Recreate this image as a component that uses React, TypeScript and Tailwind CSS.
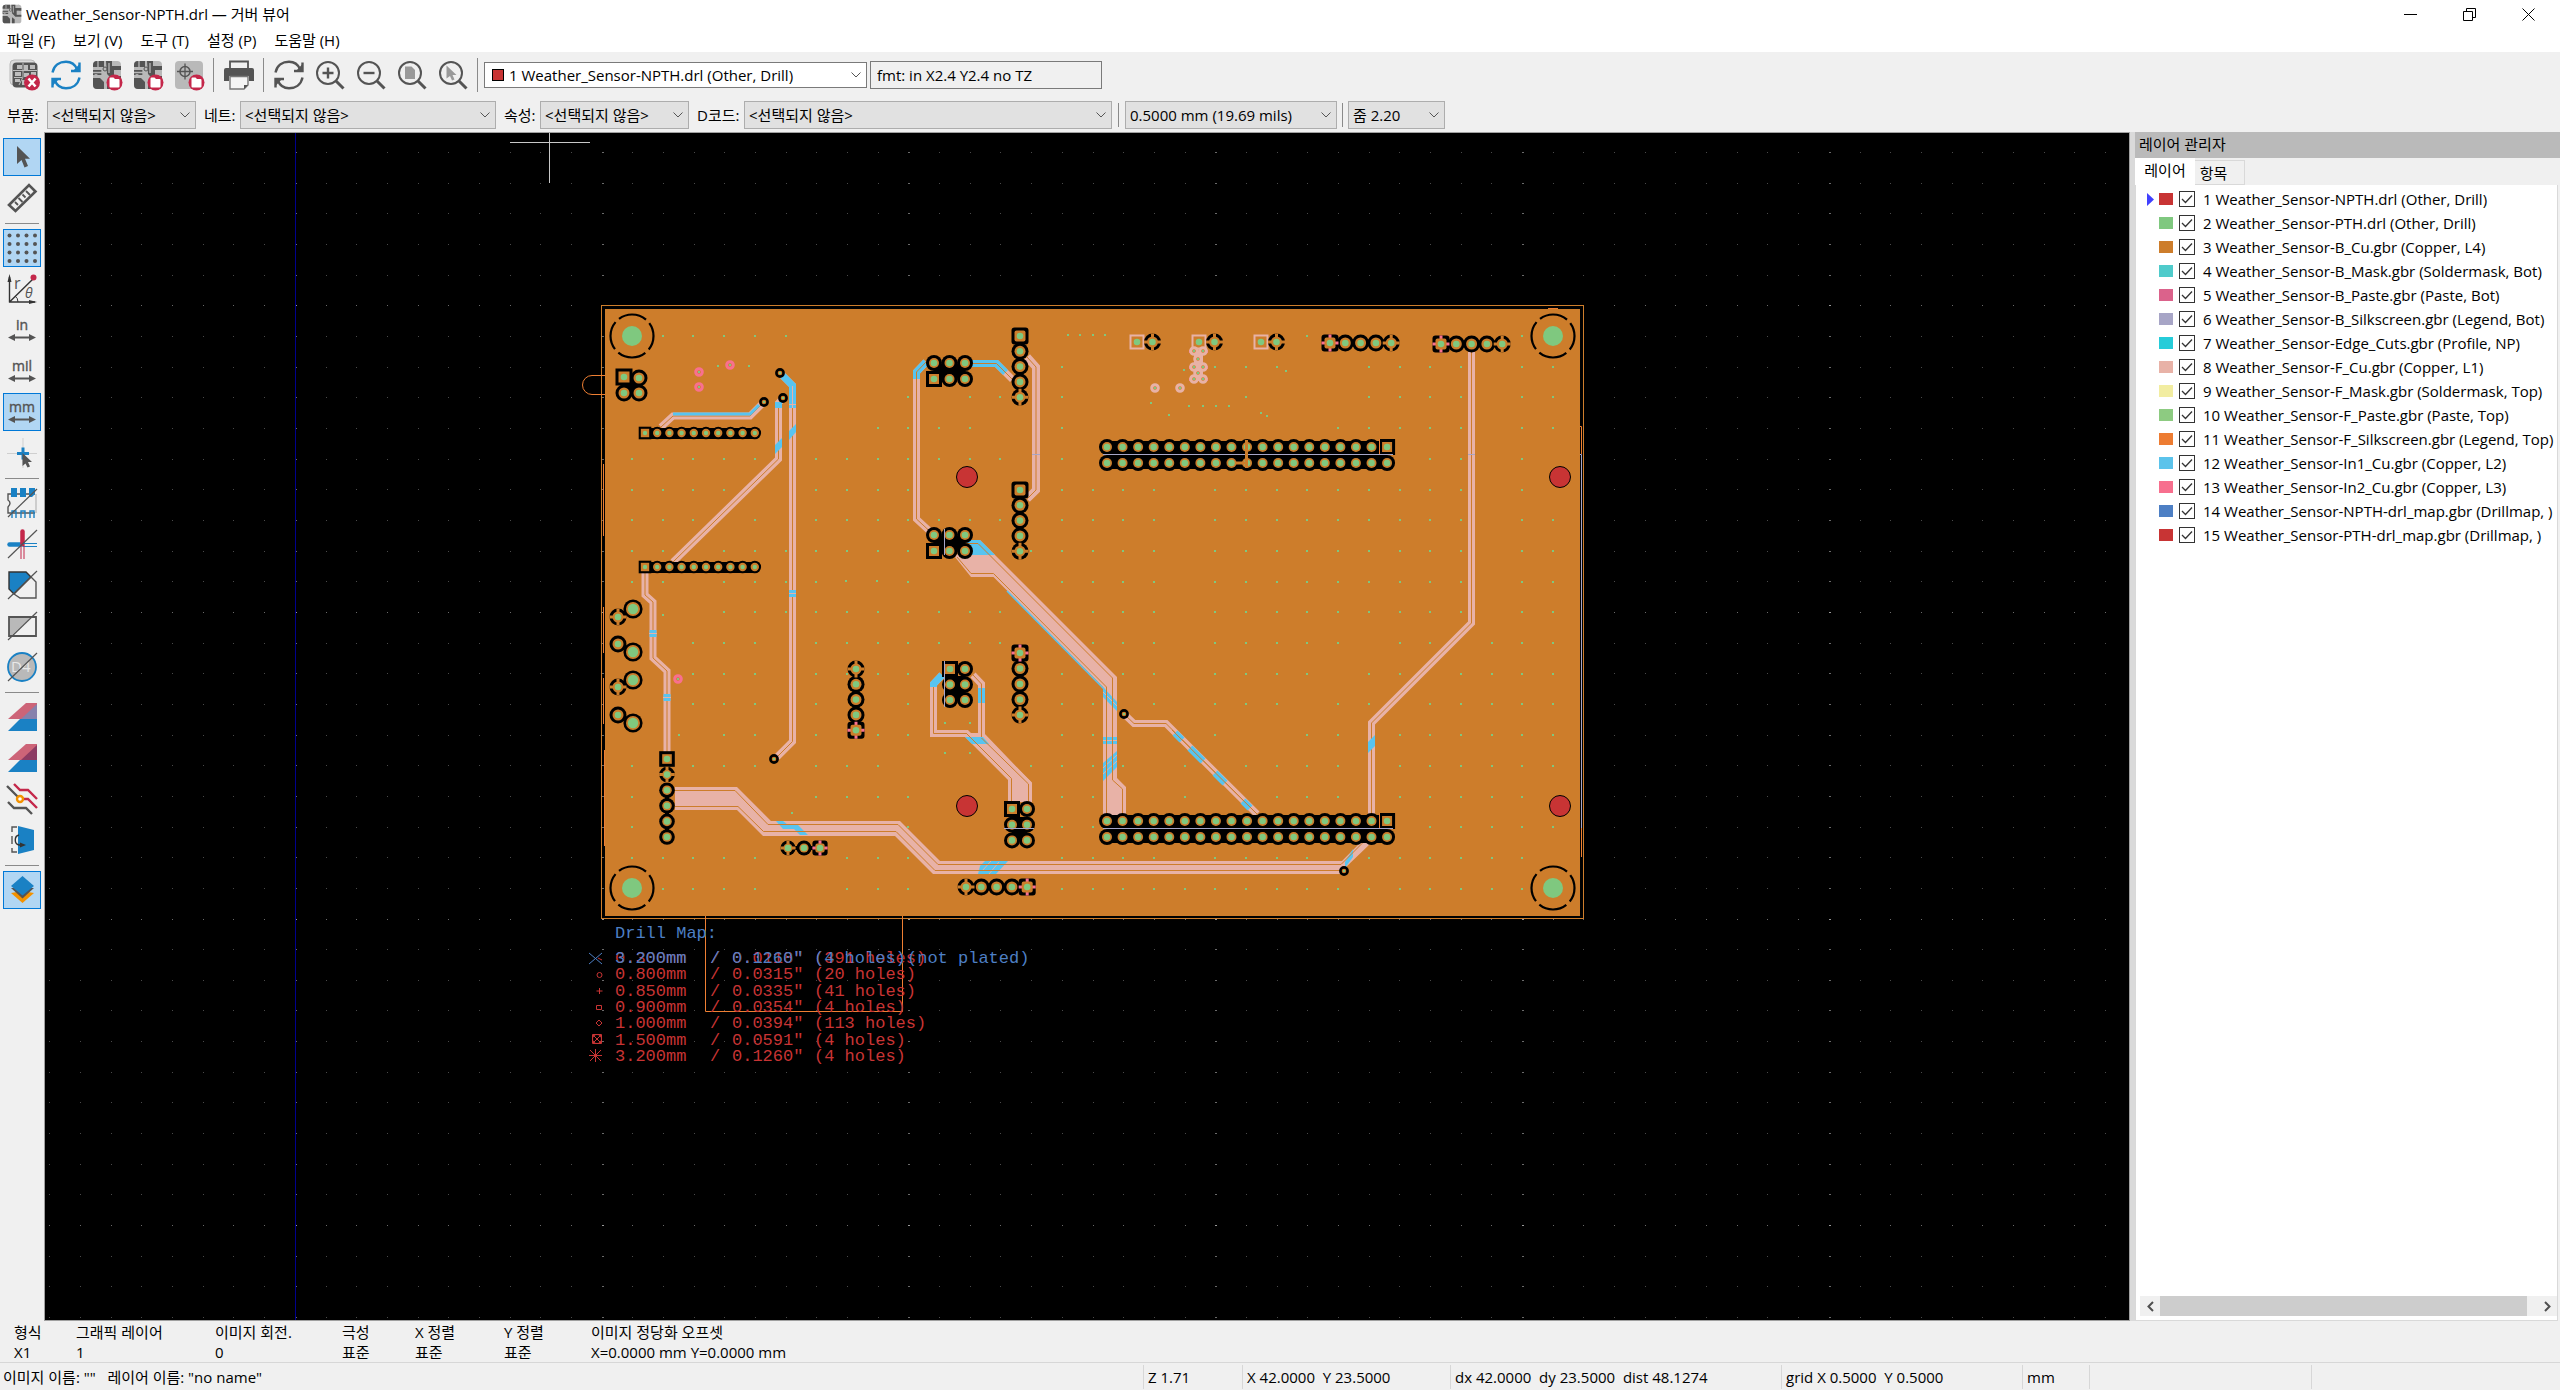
import { useState, ReactNode } from "react";

const COPPER = "#CD7D2B";
const FRONT = "#E8B2A7";
const INNER = "#58C4F0";
const DRILL = "#7FC87F";
const PINK = "#F8708F";
const SILK = "#EE7F33";
const LILAC = "#A6A6C8";
const RED = "#C83434";
const BLUE = "#4D7FC4";

const layers = [
  { name: "Weather_Sensor-NPTH.drl (Other, Drill)", color: "#C83434" },
  { name: "Weather_Sensor-PTH.drl (Other, Drill)", color: "#7FC87F" },
  { name: "Weather_Sensor-B_Cu.gbr (Copper, L4)", color: "#CD7D2B" },
  { name: "Weather_Sensor-B_Mask.gbr (Soldermask, Bot)", color: "#4FCBCB" },
  { name: "Weather_Sensor-B_Paste.gbr (Paste, Bot)", color: "#DB628B" },
  { name: "Weather_Sensor-B_Silkscreen.gbr (Legend, Bot)", color: "#A7A5C6" },
  { name: "Weather_Sensor-Edge_Cuts.gbr (Profile, NP)", color: "#26CCD9" },
  { name: "Weather_Sensor-F_Cu.gbr (Copper, L1)", color: "#E8B2A7" },
  { name: "Weather_Sensor-F_Mask.gbr (Soldermask, Top)", color: "#F2EDA1" },
  { name: "Weather_Sensor-F_Paste.gbr (Paste, Top)", color: "#8DCB81" },
  { name: "Weather_Sensor-F_Silkscreen.gbr (Legend, Top)", color: "#ED7C32" },
  { name: "Weather_Sensor-In1_Cu.gbr (Copper, L2)", color: "#5BC3EB" },
  { name: "Weather_Sensor-In2_Cu.gbr (Copper, L3)", color: "#F76F8E" },
  { name: "Weather_Sensor-NPTH-drl_map.gbr (Drillmap, )", color: "#4D7FC4" },
  { name: "Weather_Sensor-PTH-drl_map.gbr (Drillmap, )", color: "#C83434" },
];

/* ---------- toolbar icons ---------- */

function Icon({ children, size = 30 }: { children: ReactNode; size?: number }) {
  return (
    <svg width={size} height={size} viewBox="0 0 30 30" fill="none" aria-hidden="true" className="block overflow-visible">
      {children}
    </svg>
  );
}

function BoardArt() {
  return (
    <>
      <rect x="1" y="1" width="28" height="28" rx="4" fill="#B9B9B9" />
      <path d="M5 1h7v6H1V5a4 4 0 0 1 4-4zM1 10h9v5H1zM1 18h7l4 4v7H5a4 4 0 0 1-4-4z" fill="#545454" />
      <path d="M14 1h6v5h9v4h-7v6h7v3h-9l-5-5zM15 20l4 3v6h-4z" fill="#545454" />
      <path d="M6 1v6M10 10v5M25 1v5M1 12.500h9M24 10v6M17 3v10" stroke="#B9B9B9" strokeWidth="1.300" />
      <circle cx="13" cy="9" r="2" fill="#B9B9B9" stroke="#545454" />
      <circle cx="4" cy="16" r="2" fill="#B9B9B9" />
    </>
  );
}

function FolderBadge() {
  return (
    <>
      <circle cx="22.500" cy="22.500" r="8" fill="#C4274A" />
      <path d="M17.500 18.500q0-1 1-1h3l1.500 1.500h3.500q1 0 1 1v6.500q0 1-1 1h-8q-1 0-1-1z" fill="#fff" />
    </>
  );
}

function ClearIcon() {
  return (
    <Icon>
      <rect x="0" y="0" width="25" height="25" rx="4" fill="#DCDCDC" stroke="#BBB" />
      <rect x="2.500" y="2.500" width="25" height="25" rx="4" fill="#545454" />
      <path d="M7 5h5v4H7zM14 5h4v6h-4zM20 5h5v4h-5zM5 12h6v4H5zM14 13h5v4h-5zM21 12h5v3h-5zM5 19h5v3H5zM12 20h4v5h-4z" fill="#BDBDBD" />
      <path d="M3 10.500h24M13 3v14l-4 8M4 17.500h8" stroke="#BDBDBD" />
      <circle cx="22" cy="22.500" r="8" fill="#C4274A" />
      <path d="M18.500 18.500l7 8M25.500 18.500l-7 8" stroke="#fff" strokeWidth="2.600" />
    </Icon>
  );
}

function ReloadIcon({ color }: { color: string }) {
  return (
    <Icon>
      <path d="M1.500 12.500C3 5 9 1.800 15 1.800c5 0 9 2.500 11 7.500M28.500 17.500C27 25 21 28.200 15 28.200c-5 0-9-2.500-11-7.500" stroke={color} strokeWidth="2.400" />
      <path d="M28.500 2.500v8.500H20M1.500 27.500V19H10" stroke={color} strokeWidth="2.400" />
      <path d="M28.500 4v7H22zM1.500 26V19H8z" fill={color} />
    </Icon>
  );
}

function OpenBoardIcon() {
  return (
    <Icon>
      <BoardArt />
      <FolderBadge />
    </Icon>
  );
}

function OpenDrillIcon() {
  return (
    <Icon>
      <rect x="1" y="1" width="28" height="28" rx="4" fill="#B9B9B9" />
      <circle cx="11" cy="11.500" r="5" stroke="#545454" strokeWidth="1.500" />
      <path d="M11 3.500v16M3 11.500h16" stroke="#545454" strokeWidth="1.300" />
      <FolderBadge />
    </Icon>
  );
}

function PrinterIcon() {
  return (
    <Icon>
      <path d="M6 8V1.500h18V8" stroke="#545454" strokeWidth="1.800" />
      <path d="M2 8h26q2 0 2 2v11h-5v-5H5v5H0V10q0-2 2-2z" fill="#545454" />
      <path d="M6 16.500h18V25l-4 4H6z" fill="#F5F5F5" stroke="#777" strokeWidth="1.400" />
      <path d="M24 25h-4v4z" fill="#545454" />
    </Icon>
  );
}

function ZoomIcon({ children }: { children: ReactNode }) {
  return (
    <Icon>
      <circle cx="13" cy="13" r="11" stroke="#545454" strokeWidth="2" />
      <path d="M20.500 20.500l8 8" stroke="#545454" strokeWidth="3" />
      {children}
    </Icon>
  );
}

const ARROW_PATH = "M10 4v18l4.500-4 3 7.500 3.500-1.500-3-7.200h5z";

function UnitIcon({ label }: { label: string }) {
  return (
    <Icon>
      <text x="15" y="15" textAnchor="middle" fontSize="14" fill="#545454" stroke="#545454" strokeWidth="0.400" fontFamily="Open Sans, sans-serif">
        {label}
      </text>
      <path d="M4 22.500h22" stroke="#545454" strokeWidth="2" />
      <path d="M1 22.500l7-3.500v7zM29 22.500l-7-3.500v7z" fill="#545454" />
    </Icon>
  );
}

const SLASH = <path d="M1 29L30 1" stroke="#545454" strokeWidth="1.200" />;

/* ---------- small controls ---------- */

function ToolButton({ label, active, children }: { label: string; active?: boolean; children: ReactNode }) {
  return (
    <button
      type="button"
      aria-label={label}
      className={
        "flex size-[38px] shrink-0 items-center justify-center border " +
        (active ? "border-[#0078D7] bg-[#B1D6F3]" : "border-transparent")
      }
    >
      {children}
    </button>
  );
}

function VSep() {
  return <div className="mr-[3px] ml-0.5 h-[34px] w-px shrink-0 bg-[#8A8A8A]" />;
}

function HSep() {
  return (
    <div className="flex h-1.5 w-[38px] items-center px-0.5">
      <div className="h-px w-full bg-[#8A8A8A]" />
    </div>
  );
}

function Chevron() {
  return (
    <svg width="10" height="6" viewBox="0 0 10 6" fill="none" className="pointer-events-none absolute top-1/2 right-1.5 -translate-y-1/2">
      <path d="M0.500 0.500L5 5L9.500 0.500" stroke="#555" />
    </svg>
  );
}

function Combo({ id, label, value, width }: { id: string; label: string; value: string; width: string }) {
  return (
    <div className={"relative h-7 " + width}>
      <select id={id} aria-label={label} className="h-full w-full appearance-none border border-[#ADADAD] bg-[#E1E1E1] pr-5 pl-1">
        <option>{value}</option>
      </select>
      <Chevron />
    </div>
  );
}

/* ---------- board drawing ---------- */

function Dots() {
  const dots: ReactNode[] = [];
  for (let i = 0; i < 68; i++) {
    for (let j = 0; j < 39; j++) {
      const big = (i - 18) % 10 === 0;
      const bigRow = (j - 5) % 10 === 0;
      const x = Math.round(49.400 + i * 30.680);
      const y = Math.round(152 + j * 30.660);
      dots.push(
        <rect key={i + "-" + j} x={x} y={y} width={big ? 2 : 1} height="1" fill={big && bigRow ? "#999" : big || bigRow ? "#6a6a6a" : "#4a4a4a"} />
      );
    }
  }
  return <g>{dots}</g>;
}

// stitching vias, one list of columns for each row
const viaRows = [
  [1, 2, 3, 4, 5, 22, 29],
  [14, 19, 20, 21, 24, 25, 26, 27, 29, 30],
  [9, 11, 12, 14, 20, 24, 25, 26, 27, 29, 30],
  [8, 9, 10, 11, 14, 23, 24, 25, 26, 27, 29, 30],
  [0, 1, 2, 3, 4, 6, 7, 8, 9, 10, 11, 12, 14, 26, 27, 29],
  [0, 1, 2, 3, 6, 7, 8, 9, 14, 15, 16, 17, 19, 20, 21, 22, 23, 24, 25, 26, 27, 29],
  [0, 1, 2, 4, 6, 7, 8, 9, 10, 11, 12, 14, 15, 16, 17, 19, 20, 21, 22, 23, 24, 25, 26, 27, 29, 30],
  [0, 1, 3, 4, 5, 6, 7, 8, 9, 13, 14, 15, 16, 17, 19, 20, 21, 22, 23, 24, 25, 26, 27, 29, 30],
  [0, 1, 3, 4, 5, 6, 9, 14, 15, 16, 17, 19, 20, 21, 22, 23, 24, 25, 26, 27, 29, 30],
  [3, 4, 5, 6, 7, 8, 9, 10, 11, 12, 14, 15, 16, 17, 19, 20, 21, 22, 23, 24, 25, 26, 27, 29, 30],
  [2, 3, 4, 6, 7, 8, 9, 10, 11, 12, 15, 16, 17, 19, 20, 21, 22, 23, 25, 26, 28, 29, 30],
  [2, 3, 4, 6, 7, 8, 9, 14, 15, 16, 17, 19, 20, 21, 22, 24, 25, 27, 28, 29, 30],
  [2, 3, 4, 6, 9, 14, 15, 17, 19, 20, 21, 23, 24, 26, 27, 28, 29, 30],
  [3, 4, 6, 8, 9, 14, 15, 19, 22, 23, 25, 26, 27, 28, 29, 30],
  [0, 2, 3, 4, 6, 7, 8, 13, 14, 15, 16, 18, 20, 21, 22, 23, 25, 26, 27, 28, 29, 30],
  [0, 6, 7, 8, 9, 14, 15, 18, 21, 22, 23, 25, 26, 27, 28, 29],
  [0, 6, 7, 8, 9, 14, 15, 26, 27, 28, 29, 30],
  [0, 1, 2, 3, 4, 7, 8, 9, 14, 15, 16, 17, 19, 20, 21, 22, 24, 25, 26, 27, 28, 29],
  [1, 2, 3, 4, 7, 8, 9, 14, 15, 16, 17, 18, 19, 20, 21, 22, 23, 24, 25, 26, 27, 28, 29],
];

const looseVias = [
  [1068, 335], [1080, 335], [1093, 335], [1105, 335], [718, 366], [749, 366], [1184, 370], [1286, 371],
  [1151, 403], [1189, 406], [1203, 406], [1216, 406], [1229, 406], [1169, 415], [1261, 413], [1267, 416],
  [846, 581], [877, 581], [663, 615], [679, 735], [945, 723], [970, 723], [945, 753], [970, 753], [792, 813],
];

type Kind = "round" | "square" | "box" | "thermal" | "cut" | "pink";
type PadSpec = { x: number; y: number; kind?: Kind; r?: number; hole?: number };

function line(x: number, y: number, dx: number, dy: number, kinds: Kind[], r = 8.500, hole = 3.300): PadSpec[] {
  return kinds.map((kind, i) => ({ x: x + dx * i, y: y + dy * i, kind, r, hole }));
}

const R: Kind = "round";
const nineteen = Array<Kind>(19).fill("round");
const eighteenAndBox: Kind[] = [...Array<Kind>(18).fill("round"), "box"];
const boxAndNine: Kind[] = ["box", ...Array<Kind>(9).fill("round")];

const pads: PadSpec[] = [
  ...line(624, 377, 15, 1, ["box", R]),
  ...line(624, 393, 15, 0, [R, R]),
  ...line(934, 363, 15.500, 0, [R, R, R], 8),
  ...line(934, 379, 15.500, 0, ["box", R, R], 8),
  ...line(934, 535, 15.500, 0, [R, R, R], 8),
  ...line(934, 551, 15.500, 0, ["box", R, R], 8),
  ...line(1020, 336, 0, 15.300, ["square", R, R, R, "thermal"]),
  ...line(1020, 490, 0, 15.300, ["square", R, R, R, "thermal"]),
  ...line(645, 433, 12.200, 0, boxAndNine, 6.300, 2.200),
  ...line(645, 567, 12.200, 0, boxAndNine, 6.300, 2.200),
  ...line(856, 669, 0, 15.300, ["thermal", R, R, R, "cut"]),
  ...line(950, 669, 0, 15.500, ["box", R, R], 8),
  ...line(965, 669, 0, 15.500, [R, R, R], 8),
  ...line(1020, 653, 0, 15.500, ["cut", R, R, R, "thermal"]),
  ...line(667, 759, 0, 15.600, ["box", "thermal", R, R, R, R], 7.800),
  ...line(788, 848, 16, 0, ["thermal", R, "cut"], 7.600),
  ...line(1012, 809, 0, 15.700, ["box", R, R], 8),
  ...line(1027, 809, 0, 15.700, [R, R, R], 8),
  ...line(966, 887, 15.300, 0, ["thermal", R, R, R, "cut"]),
  ...line(1137, 342, 15.500, 0, ["pink", "thermal"]),
  ...line(1199, 342, 15.500, 0, ["pink", "thermal"]),
  ...line(1261, 342, 15.500, 0, ["pink", "thermal"]),
  ...line(1330, 343, 15.300, 0, ["cut", R, R, R, "thermal"]),
  ...line(1441, 344, 15.300, 0, ["cut", R, R, R, "thermal"]),
  ...line(1107, 447, 15.560, 0, eighteenAndBox, 8),
  ...line(1107, 463, 15.560, 0, nineteen, 8),
  ...line(1107, 821, 15.560, 0, eighteenAndBox, 8),
  ...line(1107, 837, 15.560, 0, nineteen, 8),
  { x: 633, y: 609, r: 9.600, hole: 5.200 },
  { x: 633, y: 652, r: 9.600, hole: 5.200 },
  { x: 633, y: 680, r: 9.600, hole: 5.200 },
  { x: 633, y: 723, r: 9.600, hole: 5.200 },
  { x: 618, y: 617, kind: "thermal" },
  { x: 618, y: 644 },
  { x: 618, y: 687, kind: "thermal" },
  { x: 618, y: 715 },
];

// black web between the clearance rings of touching pads
const webs = [
  [624, 378, 15, 15], [934, 364, 31, 14], [934, 536, 31, 14], [945, 676, 20, 24], [1012, 817, 15, 23],
  [1107, 441, 280, 28], [1107, 815, 280, 28], [645, 428, 110, 11], [645, 562, 110, 11],
  [1018, 345, 4, 46], [1018, 499, 4, 45], [854, 676, 4, 48], [1018, 660, 4, 48], [665, 784, 4, 48],
  [972, 885, 48, 4], [1340, 341, 45, 4], [1450, 342, 46, 4], [794, 846, 20, 4],
];

function PadBack({ x, y, kind = "round", r = 8.500 }: PadSpec) {
  if (kind === "box") return <rect x={x - r} y={y - r} width={r * 2} height={r * 2} fill="#000" />;
  if (kind === "square" || kind === "cut") return <rect x={x - r} y={y - r} width={r * 2} height={r * 2} rx="3" fill="#000" />;
  if (kind === "pink") return <rect x={x - r + 1} y={y - r + 1} width={r * 2 - 2} height={r * 2 - 2} fill={FRONT} />;
  return <circle cx={x} cy={y} r={r} fill="#000" />;
}

function PadFront({ x, y, kind = "round", r = 8.500, hole = 3.300 }: PadSpec) {
  const inner = r > 9 ? 7 : r < 7 ? 4.200 : r - 3;
  const boxed = kind === "box" || kind === "pink" || kind === "square" || kind === "cut";
  return (
    <g>
      {kind === "thermal" && <path d={`M${x - r} ${y}h${r * 2}M${x} ${y - r}v${r * 2}`} stroke={COPPER} strokeWidth="3" />}
      {kind === "cut" && <path d={`M${x - r} ${y}h${r * 2}M${x} ${y - r}v${r * 2}`} stroke={PINK} strokeWidth="3" />}
      {boxed ? (
        <rect x={x - inner} y={y - inner} width={inner * 2} height={inner * 2} rx={kind === "square" || kind === "cut" ? 2 : 0} fill={COPPER} />
      ) : (
        <circle cx={x} cy={y} r={inner} fill={COPPER} />
      )}
      <circle cx={x} cy={y} r={hole} fill={DRILL} />
    </g>
  );
}

function Trace({ d, w = 7, color = FRONT }: { d: string; w?: number; color?: string }) {
  return (
    <>
      <path d={d} stroke={color} strokeWidth={w} />
      <path d={d} stroke={COPPER} strokeWidth="1" />
    </>
  );
}

function Traces() {
  return (
    <g fill="none" strokeLinejoin="miter">
      <Trace d="M661 427l12-11h77l13-13" />
      <path d="M673 414h77l9-9" stroke={INNER} strokeWidth="3" />
      <Trace d="M783 398l-4.500 5v56L673 562" />
      <path d="M778.500 402v6" stroke={INNER} strokeWidth="7" />
      <path d="M775 445l7-7v9l-7 7z" fill={INNER} />
      <Trace d="M780 373l12.500 12.500V741.500L777 757" />
      <path d="M783 376l9.500 9.500V408M792.500 590v7" stroke={INNER} strokeWidth="7" />
      <path d="M789 431l7-7v8l-7 8z" fill={INNER} />
      <path d="M792.500 386v22M789 404.500h7M789 593.500h7" stroke={FRONT} />
      <Trace d="M926 362l-9.500 10V519l13 12" />
      <path d="M926 362l-9.500 10v7" stroke={INNER} strokeWidth="7" />
      <path d="M926 362l-9.500 10v7" stroke={COPPER} />
      <Trace d="M972 363.500h24.500l16 16" />
      <path d="M972 363.500h24.500l9 9" stroke={INNER} strokeWidth="7" />
      <path d="M972 363.500h24.500l14 14" stroke={COPPER} />
      <Trace d="M1027 357l9 10V490l-9 9" w={8} />
      <path d="M1032 454.500h8" stroke={LILAC} />

      {/* wide bus down to the lower 2x19 header */}
      <path d="M955 557L971 577h22.500L1103 687v129h23v-29l-9-9V677L993 553l-13-13h-10z" fill={FRONT} />
      <path d="M967 540h13l15 15h-28z" fill={INNER} />
      <path d="M1007 591l97 98" stroke={INNER} strokeWidth="1.500" />
      <path d="M1103 687l14 15v9l-14-14zM1103 737h14v7h-14zM1103 763l14-12v16l-14 14z" fill={INNER} />
      <path d="M1103 740.500h14M1103 768l14-13M1103 774l14-13M1103 692l14 14" stroke={FRONT} />
      <path d="M965 543.500h13L1112.500 678v102l10 9v27M957 557l14 16.500h22.500L1106.500 687v129" stroke={COPPER} />

      <Trace d="M1124 714l10 9.500h32L1257 814" />
      <path d="M1175 733l7 7M1190 748l13 13M1215 773l10 10M1243 801l7 7" stroke={INNER} strokeWidth="7" />
      <path d="M1172 730L1257 814" stroke={COPPER} />
      <Trace d="M1471.500 352V623L1371.500 723v93" />
      <path d="M1368 742l7-7v11l-7 7z" fill={INNER} />
      <path d="M1468 454.500h7" stroke={LILAC} />

      {/* bus along the bottom edge */}
      <path d="M675 787h62l34 34h129l40 40h402l22-22 6 5-25 24v6H933l-38-38H763l-26-26h-62z" fill={FRONT} />
      <path d="M776 821h7l5 4h10l10 10h-8l-6-6h-11zM985 861h23l-12 13h-18l2-8z" fill={INNER} />
      <path d="M1345 862l8-13v8l-8 11z" fill={INNER} />
      <path d="M982 871l9-10M989 874l10-12" stroke={FRONT} />
      <path d="M675 790.500h60l33 34h130l40 40h403l22-22M675 806.500h63l25.500 25H896l39 39h406" stroke={COPPER} />

      <Trace d="M645 573v22l8 7v56l14 13v82" />
      <path d="M653 630v7M667 694v7" stroke={INNER} strokeWidth="7" />
      <path d="M649 633.500h8M663 697.500h8" stroke={FRONT} />

      <path d="M963 733h21l47 49v20h-23v-24z" fill={FRONT} />
      <Trace d="M942 675l-8.500 9v49.500h33l45 45V802" />
      <Trace d="M973 675l8.500 9v54l47 46v18" />
      <path d="M942 675l-8.500 9v3M981.500 688v15" stroke={INNER} strokeWidth="7" />
      <path d="M965 737h18l6 7h-17z" fill={INNER} />
      <path d="M981.500 688v15M966 733l12 12M981.500 738l6 6" stroke={COPPER} />
    </g>
  );
}

const mountHoles = [[632, 336], [632, 888], [1553, 336], [1553, 888]];
const npthHoles = [[967, 477], [1560, 477], [967, 806], [1560, 806]];
const blackVias = [[780, 373], [764, 402], [783, 398], [774, 759], [1124, 714], [1344, 871]];
const pinkVias = [[699, 372], [730, 365], [699, 387], [678, 679]];
const frontVias = [
  [1155, 388], [1180, 388], [1194, 351], [1203, 351], [1198, 359], [1194, 367], [1203, 367], [1198, 373], [1194, 379], [1203, 379],
];

const drillRows = [
  ["0.300mm", "0.0118\"", "(391 holes)"],
  ["0.800mm", "0.0315\"", "(20 holes)"],
  ["0.850mm", "0.0335\"", "(41 holes)"],
  ["0.900mm", "0.0354\"", "(4 holes)"],
  ["1.000mm", "0.0394\"", "(113 holes)"],
  ["1.500mm", "0.0591\"", "(4 holes)"],
  ["3.200mm", "0.1260\"", "(4 holes)"],
];

function DrillMap() {
  return (
    <g fontFamily="Liberation Mono, monospace" fontSize="17">
      <text x="615" y="938" fill={BLUE}>Drill Map:</text>
      {drillRows.map((row, i) => (
        <text key={i} y={963 + Math.round(i * 16.300)} fill={RED}>
          <tspan x="615">{row[0]}</tspan>
          <tspan x="710">/</tspan>
          <tspan x="732">{row[1]}</tspan>
          <tspan x="814">{row[2]}</tspan>
        </text>
      ))}
      <text y="963" fill={BLUE}>
        <tspan x="615">3.200mm</tspan>
        <tspan x="710">/</tspan>
        <tspan x="732">0.1260"</tspan>
        <tspan x="814">(4 holes)</tspan>
        <tspan x="907">(not plated)</tspan>
      </text>
      <g fill="none" stroke={RED}>
        <path d="M598 958l4 2M596.500 991h6M599.500 988v6M596.500 1005.500h5v4h-5zM599 1020l3 3-3 3-3-3z" />
        <circle cx="599.500" cy="975" r="2.500" />
        <circle cx="597" cy="1039" r="4.500" />
        <path d="M592.500 1034.500h9v9h-9zM593 1035l8 8M601 1035l-8 8M589 1055.500h13M595.500 1049v13M590 1050l11 11M601 1050l-11 11" />
      </g>
      <path d="M589 953l13 11M602 953l-13 11" stroke={BLUE} />
    </g>
  );
}

function Board() {
  return (
    <svg className="block h-full w-full bg-black" role="img" aria-label="Weather_Sensor">
      <g transform="translate(-45 -133)">
        <Dots />
        <rect x="295" y="133" width="1" height="2000" fill="#00008C" />
        <path d="M510 142.500h80M549.500 133v50" stroke="#C8C8C8" />

        <rect x="601.500" y="305.500" width="982" height="613" fill="none" stroke={COPPER} />
        <rect x="605" y="309" width="975" height="607" fill={COPPER} />

        <g fill={DRILL}>
          {viaRows.map((cols, j) =>
            cols.map((i) => (
              <rect key={j + "-" + i} x={Math.round(631 + i * 30.700)} y={Math.round(335 + j * 30.700)} width="2" height="2" />
            ))
          )}
          {looseVias.map(([x, y]) => (
            <rect key={x + "-" + y} x={x - 1} y={y - 1} width="2" height="2" />
          ))}
        </g>

        <Traces />

        <g fill="#000">
          {webs.map(([x, y, w, h], i) => (
            <rect key={i} x={x} y={y} width={w} height={h} />
          ))}
        </g>
        {pads.map((p, i) => <PadBack key={i} {...p} />)}
        {pads.map((p, i) => <PadFront key={i} {...p} />)}

        {blackVias.map(([x, y], i) => (
          <g key={i}>
            <circle cx={x} cy={y} r="3.600" fill={COPPER} stroke="#000" strokeWidth="2.600" />
            <rect x={x - 1} y={y - 1} width="2" height="2" fill={DRILL} />
          </g>
        ))}
        {pinkVias.map(([x, y], i) => (
          <g key={i}>
            <circle cx={x} cy={y} r="3.300" fill={COPPER} stroke={PINK} strokeWidth="3" />
            <rect x={x - 1} y={y - 1} width="2" height="2" fill={DRILL} />
          </g>
        ))}
        <path d="M1190 350v3M1207 350v3M1190 366v3M1207 366v3M1190 378v3M1207 378v3" stroke={PINK} strokeWidth="2" />
        <rect x="1194" y="351" width="9" height="30" fill={FRONT} />
        {frontVias.map(([x, y], i) => (
          <circle key={i} cx={x} cy={y} r="3.300" fill={COPPER} stroke={FRONT} strokeWidth="3" />
        ))}
        {frontVias.map(([x, y], i) => (
          <rect key={i} x={x - 1} y={y - 1} width="2" height="2" fill={DRILL} />
        ))}

        {mountHoles.map(([x, y], i) => (
          <g key={i}>
            <circle cx={x} cy={y} r="21.500" fill="none" stroke="#000" strokeWidth="2.200" strokeDasharray="29.070 4.700" strokeDashoffset="14.530" />
            <circle cx={x} cy={y} r="10" fill={DRILL} />
          </g>
        ))}
        {npthHoles.map(([x, y], i) => (
          <circle key={i} cx={x} cy={y} r="10.500" fill={RED} stroke="#000" />
        ))}

        {/* silkscreen outlines */}
        <g fill="none" stroke={SILK}>
          <path d="M605 375.500h-13a9.500 9.500 0 0 0 0 19h13M705.500 916v95.500h197V916" />
          <path d="M603.500 464v72M603.500 607v46M603.500 678v46M604.500 750v96M1580 426.500h1.500V454M1581.500 828v29M1548 308.500h10" />
          <path d="M1379.500 439v15M1379.500 813v15" />
        </g>
        <path d="M1580 454.500h1.500V828M1103 454.500h290M1103 828.500h290M944.500 529v26M944.500 661v46M1004 828.500h30" fill="none" stroke={LILAC} />
        <path d="M1246.500 440v28M1236 463h10" stroke={COPPER} strokeWidth="3" />

        <DrillMap />
      </g>
    </svg>
  );
}

/* ---------- window parts ---------- */

function TitleBar() {
  return (
    <header className="flex h-7 shrink-0 items-center bg-white pr-0.5 pl-0.5">
      <Icon size={20}>
        <BoardArt />
      </Icon>
      <h1 className="ml-1 flex-1">Weather_Sensor-NPTH.drl — 거버 뷰어</h1>
      <button type="button" aria-label="최소화" className="flex h-full w-[59px] items-center justify-center">
        <svg width="13" height="13" stroke="#000"><path d="M0 6.500h13" /></svg>
      </button>
      <button type="button" aria-label="이전 크기로" className="flex h-full w-[59px] items-center justify-center">
        <svg width="13" height="13" fill="none" stroke="#000"><path d="M0.500 3.500h9v9h-9zM3.500 3V0.500h9v9H10" /></svg>
      </button>
      <button type="button" aria-label="닫기" className="flex h-full w-[59px] items-center justify-center">
        <svg width="13" height="13" stroke="#000"><path d="M0.500 0.500l12 12M12.500 0.500l-12 12" /></svg>
      </button>
    </header>
  );
}

function MenuBar() {
  return (
    <nav className="flex h-6 shrink-0 items-center gap-[18px] bg-white px-[7px]">
      {["파일 (F)", "보기 (V)", "도구 (T)", "설정 (P)", "도움말 (H)"].map((item) => (
        <button key={item} type="button">{item}</button>
      ))}
    </nav>
  );
}

function MainToolbar() {
  return (
    <div className="flex h-[46px] shrink-0 items-center gap-[3px] pl-1.5">
      <ToolButton label="모든 레이어 지우기"><ClearIcon /></ToolButton>
      <ToolButton label="레이어 다시 읽기"><ReloadIcon color="#1A81C4" /></ToolButton>
      <ToolButton label="자동 감지 파일 열기"><OpenBoardIcon /></ToolButton>
      <ToolButton label="거버 파일 열기"><OpenBoardIcon /></ToolButton>
      <ToolButton label="드릴 파일 열기"><OpenDrillIcon /></ToolButton>
      <VSep />
      <ToolButton label="인쇄"><PrinterIcon /></ToolButton>
      <VSep />
      <ToolButton label="새로 고침"><ReloadIcon color="#545454" /></ToolButton>
      <ToolButton label="확대">
        <ZoomIcon><path d="M7.500 13h11M13 7.500v11" stroke="#545454" strokeWidth="2.400" /></ZoomIcon>
      </ToolButton>
      <ToolButton label="축소">
        <ZoomIcon><path d="M7.500 13h11" stroke="#545454" strokeWidth="2.400" /></ZoomIcon>
      </ToolButton>
      <ToolButton label="화면에 맞추기">
        <ZoomIcon><path d="M8 6.500h6.500l3.500 3.500v9H8z" fill="#999" /></ZoomIcon>
      </ToolButton>
      <ToolButton label="선택 영역 확대">
        <ZoomIcon><path d="M8.500 5.500v13l3.500-2.500 2 4.500 2.500-1-2-4.500h4z" fill="#999" /></ZoomIcon>
      </ToolButton>
      <VSep />
      <div className="relative h-[26px] w-[383px]">
        <span className="pointer-events-none absolute top-1/2 left-2 size-3 -translate-y-1/2 border border-black bg-[#C83434]" />
        <select aria-label="활성 레이어" className="h-full w-full appearance-none border border-[#7A7A7A] bg-white pl-6">
          <option>1 Weather_Sensor-NPTH.drl (Other, Drill)</option>
        </select>
        <Chevron />
      </div>
      <input
        aria-label="형식"
        readOnly
        value="fmt: in X2.4 Y2.4 no TZ"
        className="h-7 w-[232px] border border-[#7A7A7A] bg-[#F0F0F0] px-1.5"
      />
    </div>
  );
}

function FilterToolbar() {
  return (
    <div className="flex h-[34px] shrink-0 items-center pl-[7px]">
      <label htmlFor="cmp" className="w-10">부품:</label>
      <Combo id="cmp" label="부품" value="<선택되지 않음>" width="w-[149px]" />
      <label htmlFor="net" className="ml-2 w-9">네트:</label>
      <Combo id="net" label="네트" value="<선택되지 않음>" width="w-64" />
      <label htmlFor="attr" className="ml-2 w-9">속성:</label>
      <Combo id="attr" label="속성" value="<선택되지 않음>" width="w-[149px]" />
      <label htmlFor="dcode" className="ml-2 w-[47px]">D코드:</label>
      <Combo id="dcode" label="D코드" value="<선택되지 않음>" width="w-[368px]" />
      <div className="mx-1.5 h-6 w-px bg-[#8A8A8A]" />
      <Combo id="grid" label="격자" value="0.5000 mm (19.69 mils)" width="w-[212px]" />
      <div className="mx-[5px] h-6 w-px bg-[#8A8A8A]" />
      <Combo id="zoom" label="줌" value="줌 2.20" width="w-[97px]" />
    </div>
  );
}

function SideToolbar() {
  return (
    <aside className="flex w-11 shrink-0 flex-col items-center gap-[3px] pt-1.5 pr-px">
      <ToolButton label="선택" active>
        <Icon><path d={ARROW_PATH} fill="#545454" /></Icon>
      </ToolButton>
      <ToolButton label="측정">
        <Icon>
          <path d="M2 22L22 2l6.500 6.500L8.500 28z" stroke="#545454" strokeWidth="2.600" />
          <path d="M8 19l3 3M11.500 15l4 4M15.500 11.500l3 3M19 8l4 4" stroke="#545454" strokeWidth="1.800" />
        </Icon>
      </ToolButton>
      <HSep />
      <ToolButton label="격자 표시" active>
        <Icon>
          {[2.500, 11, 19.500, 28].map((x) =>
            [2.500, 11, 19.500, 28].map((y) => <circle key={x + "," + y} cx={x} cy={y} r="2" fill="#545454" />)
          )}
        </Icon>
      </ToolButton>
      <ToolButton label="극좌표">
        <Icon>
          <path d="M2.500 28.500V3M2 28H28M2.500 28L26 5" stroke="#333" strokeWidth="1.400" />
          <path d="M2.500 0l2 8h-4zM30 28l-8 2v-4z" fill="#333" />
          <path d="M8 22q3 2 3 6" stroke="#333" />
          <circle cx="26.500" cy="3.500" r="3" fill="#C4274A" />
          <text x="7" y="15" fontSize="16" fill="#545454" fontFamily="Open Sans, sans-serif">r</text>
          <text x="18" y="24" fontSize="14" fontStyle="italic" fill="#545454" fontFamily="Open Sans, sans-serif">θ</text>
        </Icon>
      </ToolButton>
      <ToolButton label="인치"><UnitIcon label="in" /></ToolButton>
      <ToolButton label="밀"><UnitIcon label="mil" /></ToolButton>
      <ToolButton label="밀리미터" active><UnitIcon label="mm" /></ToolButton>
      <ToolButton label="전체 십자선">
        <Icon>
          <path d="M0 15.500h30M16 0v30" stroke="#CFCFCF" />
          <path d="M10 15.500h12M16 9.500v12" stroke="#1A81C4" strokeWidth="3" />
          <path d="M15.500 15v13l3-2.500 2 4 2.500-1-2-4.500h4z" fill="#545454" />
        </Icon>
      </ToolButton>
      <HSep />
      <ToolButton label="플래시 항목">
        <Icon>
          <path d="M28 6H1v6q4 3 0 7v6h27" stroke="#545454" strokeWidth="1.400" />
          <path d="M29 6v19" stroke="#AAA" />
          <path d="M4 0h6v9H4zM13 0h6v9h-6zM22 0h6v6l-3 3h-3z" fill="#1A81C4" />
          <path d="M5 30v-7h4v7M14 30v-7h4v7M23 30v-7h4v7" stroke="#1A81C4" strokeWidth="1.400" />
          {SLASH}
        </Icon>
      </ToolButton>
      <ToolButton label="선 항목">
        <Icon>
          <path d="M2.500 15.500H15" stroke="#1A81C4" strokeWidth="4.500" strokeLinecap="round" />
          <path d="M15.500 2.500V15" stroke="#C4274A" strokeWidth="4.500" strokeLinecap="round" />
          <path d="M16 14.500h14M16 17.500h14" stroke="#1A81C4" />
          <path d="M14 16v14M17 16v14" stroke="#C4274A" />
          {SLASH}
        </Icon>
      </ToolButton>
      <ToolButton label="다각형 항목">
        <Icon>
          <path d="M2 2h17l5 5L7 24l-5-5z" fill="#1A81C4" stroke="#333" strokeWidth="1.400" />
          <path d="M24 7l5 5v16H13l-6-4" stroke="#545454" strokeWidth="1.400" />
          {SLASH}
        </Icon>
      </ToolButton>
      <ToolButton label="음각 객체">
        <Icon>
          <path d="M2 6h22L4 25H2z" fill="#B9B9B9" />
          <path d="M2 6h27v19H2z" stroke="#545454" strokeWidth="1.800" />
          {SLASH}
        </Icon>
      </ToolButton>
      <ToolButton label="D코드 표시">
        <Icon>
          <circle cx="15" cy="15" r="14" fill="#B9B9B9" stroke="#1A81C4" strokeWidth="1.800" />
          <text x="4" y="20" fontSize="15" fill="#E8E8E8" fontFamily="Open Sans, sans-serif">D4</text>
          {SLASH}
        </Icon>
      </ToolButton>
      <HSep />
      <ToolButton label="차이 모드">
        <Icon>
          <path d="M1 29L13 17h17v12z" fill="#1A81C4" />
          <path d="M1 17L19 1h11v16z" fill="#CD6478" />
          <path d="M14 17L30 2v15z" fill="#8781AC" />
        </Icon>
      </ToolButton>
      <ToolButton label="XOR 모드">
        <Icon>
          <path d="M1 29L13 17h17v12z" fill="#1A81C4" />
          <path d="M1 17L19 1h11v16z" fill="#CD6478" />
          <path d="M14 17L30 2v15z" fill="#8C3B63" />
        </Icon>
      </ToolButton>
      <ToolButton label="고대비 모드">
        <Icon>
          <path d="M7 0l6 6h8l9 9M13 15h8l9 9" stroke="#C4274A" strokeWidth="2.400" />
          <path d="M0 2l12 12M1 18l6 6h12l6 6" stroke="#545454" strokeWidth="2.400" />
          <circle cx="13" cy="15" r="3" fill="#fff" stroke="#F39200" strokeWidth="2.400" />
        </Icon>
      </ToolButton>
      <ToolButton label="보기 뒤집기">
        <Icon>
          <path d="M10 2H5v5M5 11v8M5 23v4h5" stroke="#545454" strokeWidth="1.400" />
          <path d="M11 1l16 4v20l-16 4z" fill="#1A81C4" />
          <path d="M12 10c-5 1-5 9 0 10h3" stroke="#333" strokeWidth="1.400" />
          <path d="M19 20l-6-2.500v5z" fill="#333" />
        </Icon>
      </ToolButton>
      <HSep />
      <ToolButton label="레이어 관리자" active>
        <Icon>
          <path d="M4 18l11.500 10L27 18l-11.500-2z" fill="#F39200" />
          <path d="M4 13l11.500 10.500L27 13z" fill="#545454" />
          <path d="M15.500 1L27 11 15.500 20.500 4 11z" fill="#1A81C4" />
        </Icon>
      </ToolButton>
    </aside>
  );
}

function LayerManager() {
  const [visible, setVisible] = useState(layers.map(() => true));

  function toggle(index: number) {
    setVisible(visible.map((v, i) => (i === index ? !v : v)));
  }

  return (
    <section className="flex w-[425px] shrink-0 flex-col">
      <h2 className="flex h-[26px] shrink-0 items-center bg-[#BABABA] pb-0.5 pl-1">레이어 관리자</h2>
      <div className="flex h-[27px] shrink-0 items-end">
        <button type="button" className="z-10 h-full w-[60px] bg-white pb-1">레이어</button>
        <button type="button" className="h-[25px] w-[50px] border border-l-0 border-[#D9D9D9] pr-3">항목</button>
      </div>
      <div className="mr-0.5 flex min-h-0 flex-1 flex-col border border-t-0 border-[#D9D9D9] bg-white">
        <ul className="flex-1 pt-0.5">
          {layers.map((layer, i) => (
            <li key={layer.name} className="flex h-6 items-center pl-[11px]">
              <svg width="7" height="13" className="mr-[5px]">
                {i === 0 && <path d="M0 0l7 6.500L0 13z" fill="#4040FF" />}
              </svg>
              <span className="h-3 w-3.5" style={{ backgroundColor: layer.color }} />
              <label className="relative flex items-center gap-2 pl-1.5 whitespace-nowrap">
                <input
                  type="checkbox"
                  checked={visible[i]}
                  onChange={() => toggle(i)}
                  className="peer size-4 appearance-none border border-[#333] bg-white"
                />
                <svg viewBox="0 0 16 16" fill="none" className="pointer-events-none absolute left-1.5 hidden size-4 peer-checked:block">
                  <path d="M3 8l3.500 3.500L13 4.500" stroke="#333" strokeWidth="1.300" />
                </svg>
                <span>{i + 1} {layer.name}</span>
              </label>
            </li>
          ))}
        </ul>
        <div className="mb-1 ml-1 flex h-5 items-center bg-[#F0F0F0]">
          <button type="button" aria-label="왼쪽으로" className="flex h-full w-5 items-center justify-center">
            <svg width="7" height="11" fill="none" stroke="#505050" strokeWidth="2"><path d="M6 1L1.500 5.500 6 10" /></svg>
          </button>
          <div className="h-full flex-1 bg-[#CDCDCD]" />
          <button type="button" aria-label="오른쪽으로" className="ml-2.5 flex h-full w-5 items-center justify-center">
            <svg width="7" height="11" fill="none" stroke="#505050" strokeWidth="2"><path d="M1 1l4.500 4.500L1 10" /></svg>
          </button>
        </div>
      </div>
    </section>
  );
}

function InfoPanel() {
  const items = [
    { name: "형식", value: "X1", width: "w-[62px]" },
    { name: "그래픽 레이어", value: "1", width: "w-[139px]" },
    { name: "이미지 회전.", value: "0", width: "w-[127px]" },
    { name: "극성", value: "표준", width: "w-[73px]" },
    { name: "X 정렬", value: "표준", width: "w-[89px]" },
    { name: "Y 정렬", value: "표준", width: "w-[87px]" },
    { name: "이미지 정당화 오프셋", value: "X=0.0000 mm Y=0.0000 mm", width: "" },
  ];
  return (
    <dl className="flex h-[41px] shrink-0 items-center pl-3.5 leading-5">
      {items.map((item) => (
        <div key={item.name} className={item.width}>
          <dt>{item.name}</dt>
          <dd>{item.value}</dd>
        </div>
      ))}
    </dl>
  );
}

function StatusBar() {
  return (
    <footer className="flex h-7 shrink-0 items-center border-t border-[#D7D7D7] leading-6 whitespace-pre">
      <span className="flex-1 pl-[3px]">이미지 이름: ""   레이어 이름: "no name"</span>
      <span className="w-[99px] border-l border-[#D7D7D7] pl-1">Z 1.71</span>
      <span className="w-52 border-l border-[#D7D7D7] pl-1">X 42.0000  Y 23.5000</span>
      <span className="w-[331px] border-l border-[#D7D7D7] pl-1">dx 42.0000  dy 23.5000  dist 48.1274</span>
      <span className="w-[241px] border-l border-[#D7D7D7] pl-1">grid X 0.5000  Y 0.5000</span>
      <span className="w-[67px] border-l border-[#D7D7D7] pl-1">mm</span>
      <span className="h-6 w-[222px] border-l border-[#D7D7D7]" />
      <span className="h-6 w-[249px] border-l border-[#D7D7D7]" />
    </footer>
  );
}

export default function App() {
  return (
    <div className="flex h-screen flex-col overflow-hidden bg-[#F0F0F0] font-['Open_Sans','Noto_Sans_CJK_KR',sans-serif] text-[15px] leading-5 text-black">
      <TitleBar />
      <MenuBar />
      <MainToolbar />
      <FilterToolbar />
      <div className="flex min-h-0 flex-1">
        <SideToolbar />
        <main className="min-w-0 flex-1 border border-[#A0A0A0]">
          <Board />
        </main>
        <div className="w-[5px] shrink-0 bg-[#DADADA]" />
        <LayerManager />
      </div>
      <InfoPanel />
      <StatusBar />
    </div>
  );
}
